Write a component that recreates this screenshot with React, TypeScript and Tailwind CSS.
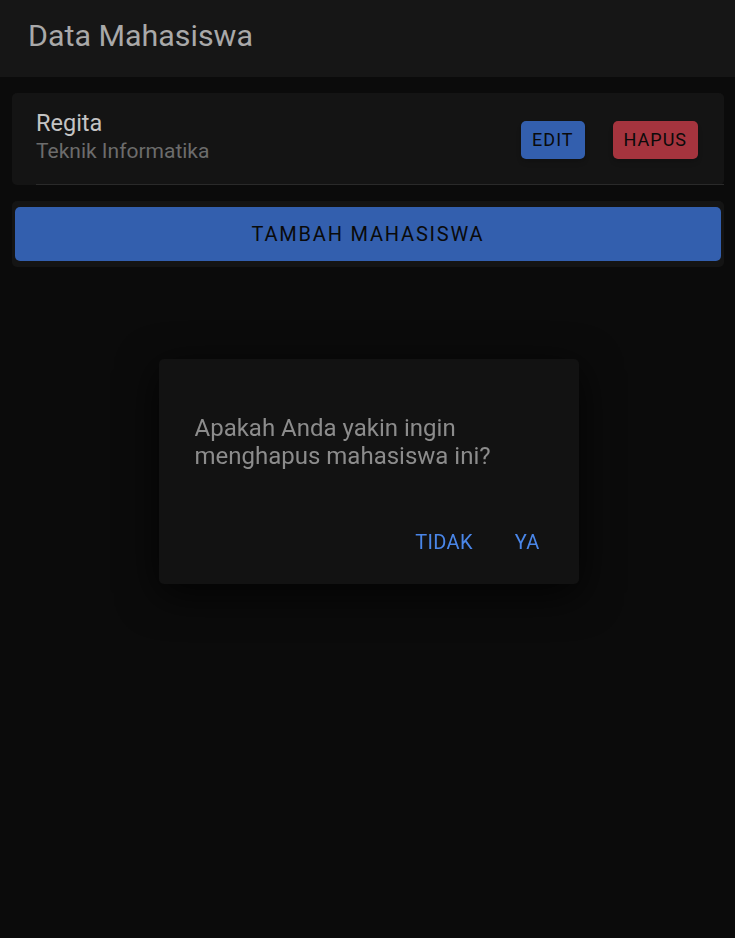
export default function App() {
  return (
    <div className="min-h-[938px] bg-[#0b0b0b] font-['Roboto',sans-serif]">
      <header className="h-[77px] bg-[#161616] flex items-center px-[28px] pb-[5px]">
        <h1 className="text-[30.4px] text-[#a9a9a9] leading-none">Data Mahasiswa</h1>
      </header>

      <main className="px-[12px] pr-[11px] pt-[16px]">
        <div className="bg-[#141414] rounded-[5px] h-[92px] flex flex-col">
          <div className="flex-1 flex items-center pl-[24px] pr-[26px]">
            <div className="flex-1 -mt-[3px]">
              <div className="text-[23.5px] leading-[28px] text-[#c4c4c4]">Regita</div>
              <div className="text-[21px] leading-[28px] text-[#6c6c6c]">Teknik Informatika</div>
            </div>
            <div className="flex items-center gap-[28px] mt-[2px]">
              <button className="h-[38px] px-[11px] rounded-[5px] bg-[#335fae] text-[#0a0a0a] text-[18px] tracking-[1px] shadow-md">
                EDIT
              </button>
              <button className="h-[38px] px-[11px] rounded-[5px] bg-[#a5343e] text-[#0a0a0a] text-[18px] tracking-[1px] shadow-md">
                HAPUS
              </button>
            </div>
          </div>
          <div className="ml-[24px] h-px bg-[#2a2a2a]" />
        </div>

        <div className="mt-[16px] bg-[#141414] rounded-[5px] px-[3px] pt-[6px] pb-[6px]">
          <button className="w-full h-[54px] rounded-[5px] bg-[#335fae] text-[#0a0a0a] text-[20px] tracking-[1.8px]">
            TAMBAH MAHASISWA
          </button>
        </div>
      </main>

      <div className="fixed inset-0 flex items-center justify-center pt-[5px] pl-[2px]">
        <div className="w-[420px] h-[225px] bg-[#121212] rounded-[5px] shadow-[0_10px_40px_rgba(0,0,0,0.8)] flex flex-col pl-[36px] pr-[31px] pt-[55px] pb-[24px]">
          <p className="text-[24px] leading-[28px] text-[#8c8c8c]">
            Apakah Anda yakin ingin
            <br />
            menghapus mahasiswa ini?
          </p>
          <div className="mt-auto flex justify-end items-center gap-[26px]">
            <button className="px-[8px] h-[36px] text-[20px] tracking-[0.3px] text-[#4a86e8]">TIDAK</button>
            <button className="px-[8px] h-[36px] text-[20px] tracking-[0.3px] text-[#4a86e8]">YA</button>
          </div>
        </div>
      </div>
    </div>
  );
}
